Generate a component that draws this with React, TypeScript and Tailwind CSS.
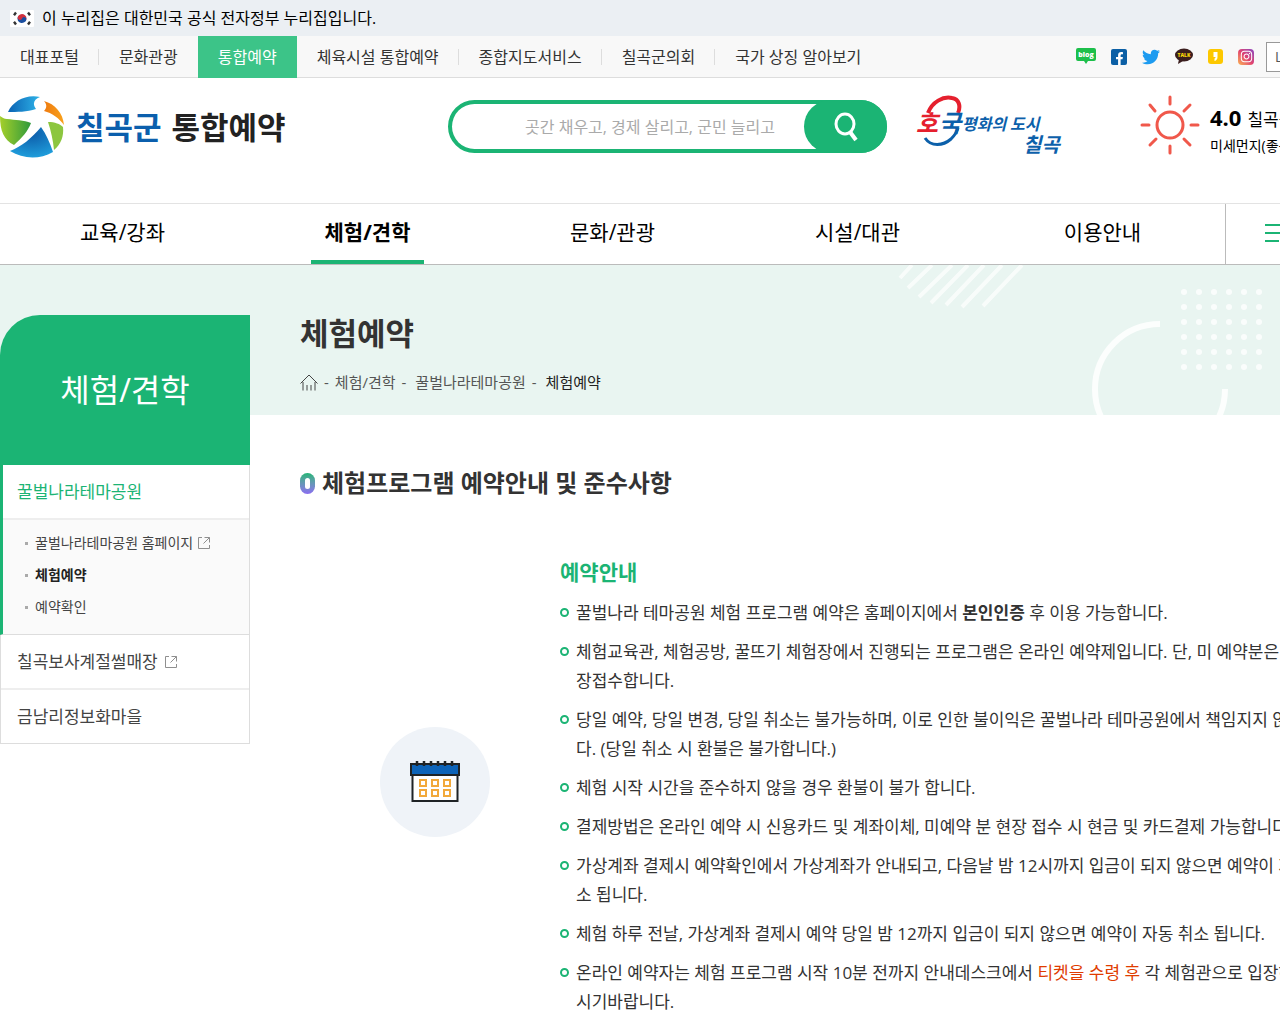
import type { ReactNode } from "react";
import { FaFacebookF, FaInstagram, FaTwitter } from "react-icons/fa";

const portalLinks = [
  { label: "대표포털", divider: true },
  { label: "문화관광" },
  { label: "통합예약", active: true },
  { label: "체육시설 통합예약", divider: true },
  { label: "종합지도서비스", divider: true },
  { label: "칠곡군의회", divider: true },
  { label: "국가 상징 알아보기" },
];

const mainMenu = [
  { label: "교육/강좌" },
  { label: "체험/견학", active: true },
  { label: "문화/관광" },
  { label: "시설/대관" },
  { label: "이용안내" },
];

const notices: ReactNode[] = [
  <>
    꿀벌나라 테마공원 체험 프로그램 예약은 홈페이지에서 <strong>본인인증</strong> 후 이용
    가능합니다.
  </>,
  "체험교육관, 체험공방, 꿀뜨기 체험장에서 진행되는 프로그램은 온라인 예약제입니다. 단, 미 예약분은 당일 현장접수합니다.",
  "당일 예약, 당일 변경, 당일 취소는 불가능하며, 이로 인한 불이익은 꿀벌나라 테마공원에서 책임지지 않습니다. (당일 취소 시 환불은 불가합니다.)",
  "체험 시작 시간을 준수하지 않을 경우 환불이 불가 합니다.",
  "결제방법은 온라인 예약 시 신용카드 및 계좌이체, 미예약 분 현장 접수 시 현금 및 카드결제 가능합니다.",
  "가상계좌 결제시 예약확인에서 가상계좌가 안내되고, 다음날 밤 12시까지 입금이 되지 않으면 예약이 자동 취소 됩니다.",
  "체험 하루 전날, 가상계좌 결제시 예약 당일 밤 12까지 입금이 되지 않으면 예약이 자동 취소 됩니다.",
  <>
    온라인 예약자는 체험 프로그램 시작 10분 전까지 안내데스크에서{" "}
    <span className="text-[#e03c00]">티켓을 수령 후</span> 각 체험관으로 입장하여 주시기바랍니다.
  </>,
];

function FlagIcon() {
  return (
    <svg width="24" height="17" viewBox="0 0 24 17" aria-hidden="true">
      <rect width="24" height="17" rx="1" fill="#fff" />
      <g transform="rotate(20 12 8.5)">
        <path d="M7.5 8.5a4.5 4.5 0 0 1 9 0z" fill="#d0303f" />
        <path d="M7.5 8.5a4.5 4.5 0 0 0 9 0z" fill="#1b4fa0" />
        <circle cx="9.75" cy="8.5" r="2.25" fill="#d0303f" />
        <circle cx="14.25" cy="8.5" r="2.25" fill="#1b4fa0" />
      </g>
      <g stroke="#333" strokeWidth="2.4">
        <path d="M4 5.2 6 2.6M18 2.6l2 2.6M4 11.8l2 2.6M18 14.4l2-2.6" />
      </g>
    </svg>
  );
}

function SymbolIcon() {
  return (
    <svg width="66" height="64" viewBox="0 0 66 64" aria-hidden="true">
      <defs>
        <linearGradient id="sky" x1="0" x2="1">
          <stop offset="0" stopColor="#0a62b3" />
          <stop offset="1" stopColor="#2fb3e8" />
        </linearGradient>
        <linearGradient id="leaf" x1="0" x2="1">
          <stop offset="0" stopColor="#a5cf2a" />
          <stop offset="1" stopColor="#2f9a3c" />
        </linearGradient>
        <linearGradient id="sun" x1="0" x2="1">
          <stop offset="0" stopColor="#ee7a10" />
          <stop offset="1" stopColor="#f9a21b" />
        </linearGradient>
        <radialGradient id="sea" cx="0.5" cy="0.2" r="0.8">
          <stop offset="0" stopColor="#0c5aa8" />
          <stop offset="1" stopColor="#1f9ddb" />
        </radialGradient>
      </defs>
      <path d="M8 17C13 6 26-1 40 2c-6 2-8 7-4 12-9 3-19 3-28 3z" fill="url(#sky)" />
      <path d="M44 6c11 3 19 12 20 24-5-7-12-12-20-14 3-3 3-7 0-10z" fill="url(#sun)" />
      <path d="M0 21c2 1 4 3 7 3 8 1 17 1 24 4-3 8-9 15-17 22C4 45 0 36 0 21z" fill="url(#leaf)" />
      <path d="M48 27c7 0 12 2 15 5 1 9-2 17-9 23-1-10-3-19-6-28z" fill="#8cc63f" />
      <path d="M10 56c11-4 22-13 31-24 5 7 9 16 12 25-14 8-30 7-43-1z" fill="url(#sea)" />
    </svg>
  );
}

function SloganLogo() {
  return (
    <svg
      width="148"
      height="64"
      viewBox="0 0 148 64"
      role="img"
      aria-label="호국평화의 도시 칠곡"
      className="font-['Noto_Sans_CJK_KR',sans-serif]"
    >
      <path d="M12 18C16 7 27 1 36 3c7 1 9 8 6 15" fill="none" stroke="#e5202e" strokeWidth="4" />
      <path d="M9 43c6 9 18 8 26 1 4-4 6-7 7-11" fill="none" stroke="#0c60aa" strokeWidth="3" />
      <g fontStyle="italic" fontWeight="700">
        <text x="0" y="37" fontSize="24" fill="#e5202e">호</text>
        <text x="23" y="37" fontSize="24" fill="#0c60aa">국</text>
        <text x="46" y="35" fontSize="16" fill="#0c60aa">평화의</text>
        <text x="94" y="35" fontSize="16" fill="#0c60aa">도시</text>
        <text x="107" y="57" fontSize="20" fill="#0c60aa">칠곡</text>
      </g>
    </svg>
  );
}

function SunIcon() {
  return (
    <svg width="60" height="60" viewBox="0 0 60 60" fill="none" stroke="#f0584b" strokeWidth="3" strokeLinecap="round" aria-hidden="true">
      <circle cx="30" cy="30" r="13" />
      <path d="M30 2v7M30 51v7M2 30h7M51 30h7M10 10l5 6M50 10l-6 6M10 50l6-6M50 50l-6-6" />
    </svg>
  );
}

function ExternalIcon() {
  return (
    <svg width="12" height="12" viewBox="0 0 12 12" fill="none" stroke="#8f8f8f" aria-hidden="true">
      <path d="M4 .5H.5v11h11V8M6.5.5h5v5M11.5.5l-6 6" />
    </svg>
  );
}

function CalendarIcon() {
  return (
    <svg width="50" height="42" viewBox="0 0 50 42" aria-hidden="true">
      <rect x="2.5" y="12" width="45" height="28" fill="#fff" stroke="#1f2326" strokeWidth="2" />
      <rect x="1" y="3" width="48" height="11" fill="#0d63b8" stroke="#1f2326" strokeWidth="2" />
      <path d="M7 0v5M14 0v5M21 0v5M28 0v5M35 0v5M42 0v5" stroke="#1f2326" strokeWidth="2.5" />
      <g fill="none" stroke="#f2a93b" strokeWidth="2">
        {[10, 22, 34].map((x) => (
          <g key={x}>
            <rect x={x} y="19" width="6" height="6" />
            <rect x={x} y="29" width="6" height="6" />
          </g>
        ))}
      </g>
    </svg>
  );
}

function BannerPattern() {
  const steps = [0, 15, 30, 45, 60, 75];
  return (
    <svg className="absolute top-0 left-[880px]" width="400" height="150" viewBox="0 0 400 150" aria-hidden="true">
      <g stroke="#fff" strokeWidth="4" opacity="0.7">
        <path d="M20 13 32 0M28 23 52 0M39 32 72 0M51 38 88 0M66 40 104 0M82 42 122 0M103 41 142 0" />
      </g>
      <path d="M280 59A65 65 0 1 0 345 124" transform="translate(0 0)" fill="none" stroke="#fff" strokeWidth="6" opacity="0.85" />
      <g fill="#fff" opacity="0.8">
        {steps.map((y) =>
          steps.map((x) => <circle key={`${x}-${y}`} cx={304 + x} cy={27 + y} r="3" />)
        )}
      </g>
    </svg>
  );
}

function SocialLinks() {
  return (
    <div className="flex items-center gap-[15px]">
      <a href="#blog" aria-label="블로그">
        <svg width="20" height="17" viewBox="0 0 20 17" className="font-['Open_Sans',sans-serif]">
          <path d="M2 0h16a2 2 0 0 1 2 2v9a2 2 0 0 1-2 2h-6l-2 3-2-3H2a2 2 0 0 1-2-2V2a2 2 0 0 1 2-2z" fill="#1dbf4b" />
          <text x="10" y="9" textAnchor="middle" fontSize="7" fontWeight="800" fill="#fff">blog</text>
        </svg>
      </a>
      <a href="#facebook" aria-label="페이스북" className="flex h-4 w-4 items-end justify-center rounded-xs bg-[#0b5fa5] text-white">
        <FaFacebookF size={13} />
      </a>
      <a href="#twitter" aria-label="트위터" className="text-[#1d9bf0]">
        <FaTwitter size={18} />
      </a>
      <a href="#talk" aria-label="카카오톡">
        <svg width="18" height="17" viewBox="0 0 18 17" className="font-['Open_Sans',sans-serif]">
          <ellipse cx="9" cy="7" rx="9" ry="6.5" fill="#3b1e1e" />
          <path d="m4 11-1 5 5-3z" fill="#3b1e1e" />
          <text x="9" y="9" textAnchor="middle" fontSize="5" fontWeight="800" fill="#fbd808">TALK</text>
        </svg>
      </a>
      <a href="#story" aria-label="카카오스토리">
        <svg width="15" height="15" viewBox="0 0 15 15">
          <rect width="15" height="15" rx="3" fill="#fdc800" />
          <path d="M5.5 3h4v5c0 2-1 3.5-3 4V9.5c.8-.3 1-.8 1-1.5h-2z" fill="#fff" />
        </svg>
      </a>
      <a href="#instagram" aria-label="인스타그램" className="flex h-4 w-4 items-center justify-center rounded-sm bg-linear-to-tr from-[#f9b04b] via-[#e0406f] to-[#8a3fc0] text-white">
        <FaInstagram size={13} />
      </a>
    </div>
  );
}

function TopBars() {
  return (
    <>
      <div className="flex h-9 items-center gap-2 bg-[#ebeff3] pl-[10px] text-base text-black">
        <FlagIcon />
        <p>이 누리집은 대한민국 공식 전자정부 누리집입니다.</p>
      </div>
      <div className="flex h-[42px] items-center justify-between border-b border-[#ddd] bg-[#f8f8f8] pr-[10px]">
        <ul className="flex items-center text-base text-[#333]">
          {portalLinks.map((link) => (
            <li className="flex items-center" key={link.label}>
              <a
                className={
                  link.active
                    ? "block bg-[#3cc488] px-5 leading-[42px] text-white"
                    : "block px-5 leading-[42px]"
                }
                href="#portal"
              >
                {link.label}
              </a>
              {link.divider && <span className="-ml-px h-4 w-px bg-[#ddd]" />}
            </li>
          ))}
        </ul>
        <div className="flex items-center gap-3">
          <SocialLinks />
          <select aria-label="언어 선택" className="h-[30px] w-[124px] appearance-none border border-[#999] bg-white px-2 text-sm text-[#555]">
            <option>LANGUAGE</option>
          </select>
        </div>
      </div>
    </>
  );
}

function Header() {
  return (
    <header className="flex h-[125px] items-start pt-[17px]">
      <h1 className="w-[448px]">
        <a className="flex items-center gap-[10px] text-[31px] leading-[64px] font-bold" href="#home">
          <SymbolIcon />
          <span className="flex gap-[10px] text-[#222]">
            <span className="text-[#0b5fad]">칠곡군</span>
            <span>통합예약</span>
          </span>
        </a>
      </h1>
      <form className="mt-[5px] flex h-[53px] w-[439px] rounded-full border-4 border-[#1bb474] bg-[#1bb474]">
        <input
          aria-label="검색어"
          className="min-w-0 flex-1 rounded-l-full bg-white pl-6 text-center text-base outline-none placeholder:text-[#aaa]"
          placeholder="곳간 채우고, 경제 살리고, 군민 늘리고"
          type="text"
        />
        <button
          aria-label="검색"
          className="relative -my-1 -mr-1 -ml-5 flex w-[83px] items-center justify-center rounded-full bg-[#1bb474]"
          type="button"
        >
          <svg width="26" height="30" viewBox="0 0 26 30" fill="none" stroke="#fff" strokeWidth="3" aria-hidden="true">
            <ellipse cx="12" cy="12" rx="9" ry="10" />
            <path d="m17 20 6 8" strokeWidth="4" />
          </svg>
        </button>
      </form>
      <a className="ml-[29px]" href="#slogan">
        <SloganLogo />
      </a>
      <div className="ml-[76px] flex gap-[10px] text-black">
        <SunIcon />
        <div className="pt-2 whitespace-nowrap">
          <p className="flex items-baseline gap-[6px] text-[17px] leading-7">
            <strong className="text-[22px]">4.0</strong> 칠곡군
          </p>
          <p className="text-sm leading-6">미세먼지(좋음)</p>
        </div>
      </div>
    </header>
  );
}

function MainMenu() {
  return (
    <nav className="flex h-[62px] border-t border-b border-t-[#e3e3e3] border-b-[#bbb] text-[21px] text-black">
      <ul className="flex">
        {mainMenu.map((item) => (
          <li className="flex w-[245px] justify-center" key={item.label}>
            <a
              className={
                item.active
                  ? "border-b-4 border-[#1bb474] px-[14px] leading-[56px] font-bold"
                  : "px-[14px] leading-[56px]"
              }
              href="#menu"
            >
              {item.label}
            </a>
          </li>
        ))}
      </ul>
      <button
        aria-label="전체메뉴"
        className="flex flex-1 flex-col justify-center gap-[6px] border-l border-[#bbb] pb-[2px] pl-[39px]"
        type="button"
      >
        <span className="h-[2px] w-[24px] bg-[#1bb474]" />
        <span className="h-[2px] w-[24px] bg-[#1bb474]" />
        <span className="h-[2px] w-[14px] bg-[#1bb474]" />
      </button>
    </nav>
  );
}

function Sidebar() {
  return (
    <aside className="relative mt-[50px] w-[250px] shrink-0">
      <h2 className="rounded-tl-[40px] bg-[#1bb474] text-center text-[32px] leading-[150px] text-white">
        체험/견학
      </h2>
      <ul className="border-r border-b border-[#ddd] text-[17px] text-[#444]">
        <li className="border-b border-l-3 border-b-[#ddd] border-l-[#1bb474]">
          <a className="block border-b-2 border-[#eee] pl-[14px] leading-[53px] text-[#1bb474]" href="#park">
            꿀벌나라테마공원
          </a>
          <ul className="bg-[#fafafa] pt-[7px] pb-[11px] text-sm leading-8">
            <li className="flex items-center gap-[7px] pl-[22px]">
              <span className="h-[3px] w-[3px] bg-[#aaa]" />
              <a className="flex items-center gap-[5px]" href="#park-home">
                꿀벌나라테마공원 홈페이지
                <ExternalIcon />
              </a>
            </li>
            <li className="flex items-center gap-[7px] pl-[22px]">
              <span className="h-[3px] w-[3px] bg-[#aaa]" />
              <a className="font-bold text-[#222]" href="#reserve">체험예약</a>
            </li>
            <li className="flex items-center gap-[7px] pl-[22px]">
              <span className="h-[3px] w-[3px] bg-[#aaa]" />
              <a href="#confirm">예약확인</a>
            </li>
          </ul>
        </li>
        <li className="border-l border-[#ddd]">
          <a className="flex items-center gap-[7px] border-b-2 border-[#eee] pl-4 leading-[53px]" href="#sled">
            칠곡보사계절썰매장
            <ExternalIcon />
          </a>
        </li>
        <li className="border-l border-[#ddd]">
          <a className="block pl-4 leading-[53px]" href="#village">금남리정보화마을</a>
        </li>
      </ul>
    </aside>
  );
}

function Breadcrumb() {
  return (
    <div className="mt-[10px] flex items-center gap-[6px] text-[15px] leading-7 text-[#555]">
      <a aria-label="홈" href="#home">
        <svg width="18" height="17" viewBox="0 0 18 17" fill="none" stroke="#444" aria-hidden="true">
          <path d="M.5 9.5 9 1l8.500 8.500M3 8v8.500M15 8v8.500M7 16.500V11M11 11v5.500" />
        </svg>
      </a>
      <span>-</span>
      <a href="#experience">체험/견학</a>
      <span>-</span>
      <a className="ml-[3px]" href="#park">꿀벌나라테마공원</a>
      <span>-</span>
      <span className="ml-[3px] text-[#222]">체험예약</span>
    </div>
  );
}

function ReservationGuide() {
  return (
    <section className="pt-[48px]">
      <h3 className="flex items-center gap-[7px] text-2xl leading-10 font-bold text-[#333]">
        <span className="h-[21px] w-[15px] rounded-full bg-linear-to-b from-[#1bb474] to-[#8a6cf0] p-[5px]">
          <span className="block h-full rounded-full bg-white" />
        </span>
        체험프로그램 예약안내 및 준수사항
      </h3>
      <div className="mt-[44px] flex items-center">
        <div className="flex w-[260px] shrink-0 justify-center pl-[10px]">
          <div className="flex h-[110px] w-[110px] items-center justify-center rounded-full bg-[#eff3f8]">
            <CalendarIcon />
          </div>
        </div>
        <div>
          <h4 className="text-[21px] leading-[51px] font-bold text-[#1bb474]">예약안내</h4>
          <ul className="space-y-[10px] text-[17px] leading-[29px] text-[#333]">
            {notices.map((notice, index) => (
              <li className="flex gap-[7px]" key={index}>
                <span className="mt-[10px] h-[9px] w-[9px] shrink-0 rounded-full border-2 border-[#1bb474]" />
                <p>{notice}</p>
              </li>
            ))}
          </ul>
        </div>
      </div>
    </section>
  );
}

export default function App() {
  return (
    <div className="overflow-hidden bg-white font-['Open_Sans','Noto_Sans_CJK_KR',sans-serif]">
      <div className="min-w-[1400px]">
        <TopBars />
        <Header />
        <MainMenu />
        <div className="relative flex">
          <div className="absolute inset-x-0 top-0 h-[150px] bg-[#e9f5f1]">
            <BannerPattern />
          </div>
          <Sidebar />
          <main className="relative flex-1 pr-[62px] pl-[50px]">
            <div className="h-[150px] pt-[43px]">
              <h2 className="text-[31px] leading-[50px] font-bold text-[#333]">체험예약</h2>
              <Breadcrumb />
            </div>
            <ReservationGuide />
          </main>
        </div>
      </div>
    </div>
  );
}
